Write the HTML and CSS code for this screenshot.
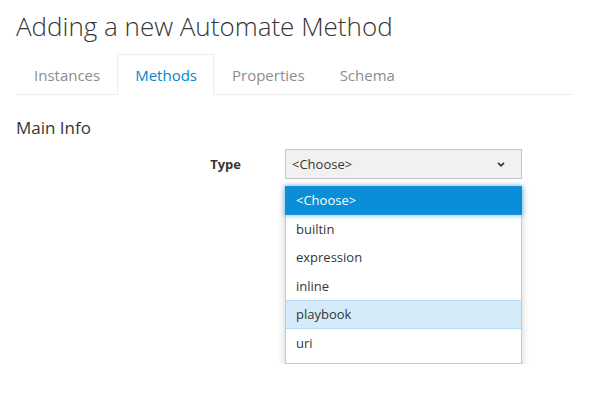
FILE: index.html
```html
<!DOCTYPE html>
<html>
<head>
<meta charset="utf-8">
<link rel="stylesheet" href="styles.css">
</head>
<body>
<div class="page">
  <h1 class="title">Adding a new Automate Method</h1>
  <ul class="tabs">
    <li class="tab">Instances</li>
    <li class="tab active">Methods</li>
    <li class="tab">Properties</li>
    <li class="tab">Schema</li>
  </ul>
  <h3 class="section">Main Info</h3>
  <div class="form-row">
    <div class="label">Type</div>
    <div class="select-wrap">
      <div class="select">
        <span>&lt;Choose&gt;</span>
        <svg class="chev" width="8" height="5" viewBox="0 0 8 5"><path d="M1 0.8 L4 3.8 L7 0.8" fill="none" stroke="#363636" stroke-width="1.7"/></svg>
      </div>
      <ul class="menu">
        <li class="item selected">&lt;Choose&gt;</li>
        <li class="item">builtin</li>
        <li class="item">expression</li>
        <li class="item">inline</li>
        <li class="item hover">playbook</li>
        <li class="item">uri</li>
      </ul>
    </div>
  </div>
</div>
</body>
</html>
```

FILE: styles.css
```css
html, body {
  margin: 0;
  padding: 0;
  background: #ffffff;
}
body {
  font-family: "Open Sans", "Liberation Sans", sans-serif;
  color: #363636;
}
.page {
  padding: 0 27px 0 16px;
}
.title {
  margin: 0;
  padding-top: 7px;
  font-size: 26px;
  font-weight: 300;
  line-height: 38px;
  color: #363636;
}
.tabs {
  list-style: none;
  margin: 9px 0 0 0;
  padding: 0;
  display: flex;
  border-bottom: 1px solid #ededed;
}
.tab {
  padding: 0 16px 0 17px;
  height: 39px;
  line-height: 40px;
  font-size: 15px;
  color: #8b8d8f;
  border: 1px solid transparent;
  border-bottom: none;
  margin-bottom: -1px;
}
.tab.active {
  color: #0088ce;
  border-color: #ededed;
  background: #fff;
  height: 40px;
}
.section {
  margin: 21px 0 0 0;
  font-size: 17px;
  font-weight: 400;
  line-height: 24px;
  color: #363636;
}
.form-row {
  display: grid;
  grid-template-columns: 225px 237px;
  column-gap: 44px;
  align-items: start;
  margin-top: 9px;
}
.label {
  text-align: right;
  font-size: 13px;
  font-weight: 700;
  line-height: 30px;
  color: #363636;
}
.select {
  box-sizing: border-box;
  height: 30px;
  border: 1px solid #c6c6c6;
  background: #f1f1f1;
  display: flex;
  align-items: center;
  justify-content: space-between;
  padding: 0 16px 0 6px;
  font-size: 13px;
  color: #363636;
}
.chev {
  display: block;
  margin-top: 1px;
}
.menu {
  margin: 7px 0 0 0;
  padding: 0 0 6px 0;
  list-style: none;
  background: #fff;
  border: 1px solid #c8c8c8;
  border-top: none;
  box-shadow: 0 3px 8px rgba(0,0,0,0.18);
}
.item {
  box-sizing: border-box;
  height: 28.5px;
  line-height: 27px;
  padding: 0 10px;
  font-size: 13px;
  color: #363636;
  border-top: 1px solid transparent;
  border-bottom: 1px solid transparent;
}
.item.selected {
  background: #0a8ed8;
  color: #fff;
  margin: 0 -1px;
  padding-left: 11px;
  box-shadow: 0 0 4px 1px rgba(60,160,230,0.55);
  border-color: #1b93dc;
}
.item.hover {
  background: #d5ebf9;
  border-color: #b7dcf5;
}
```
